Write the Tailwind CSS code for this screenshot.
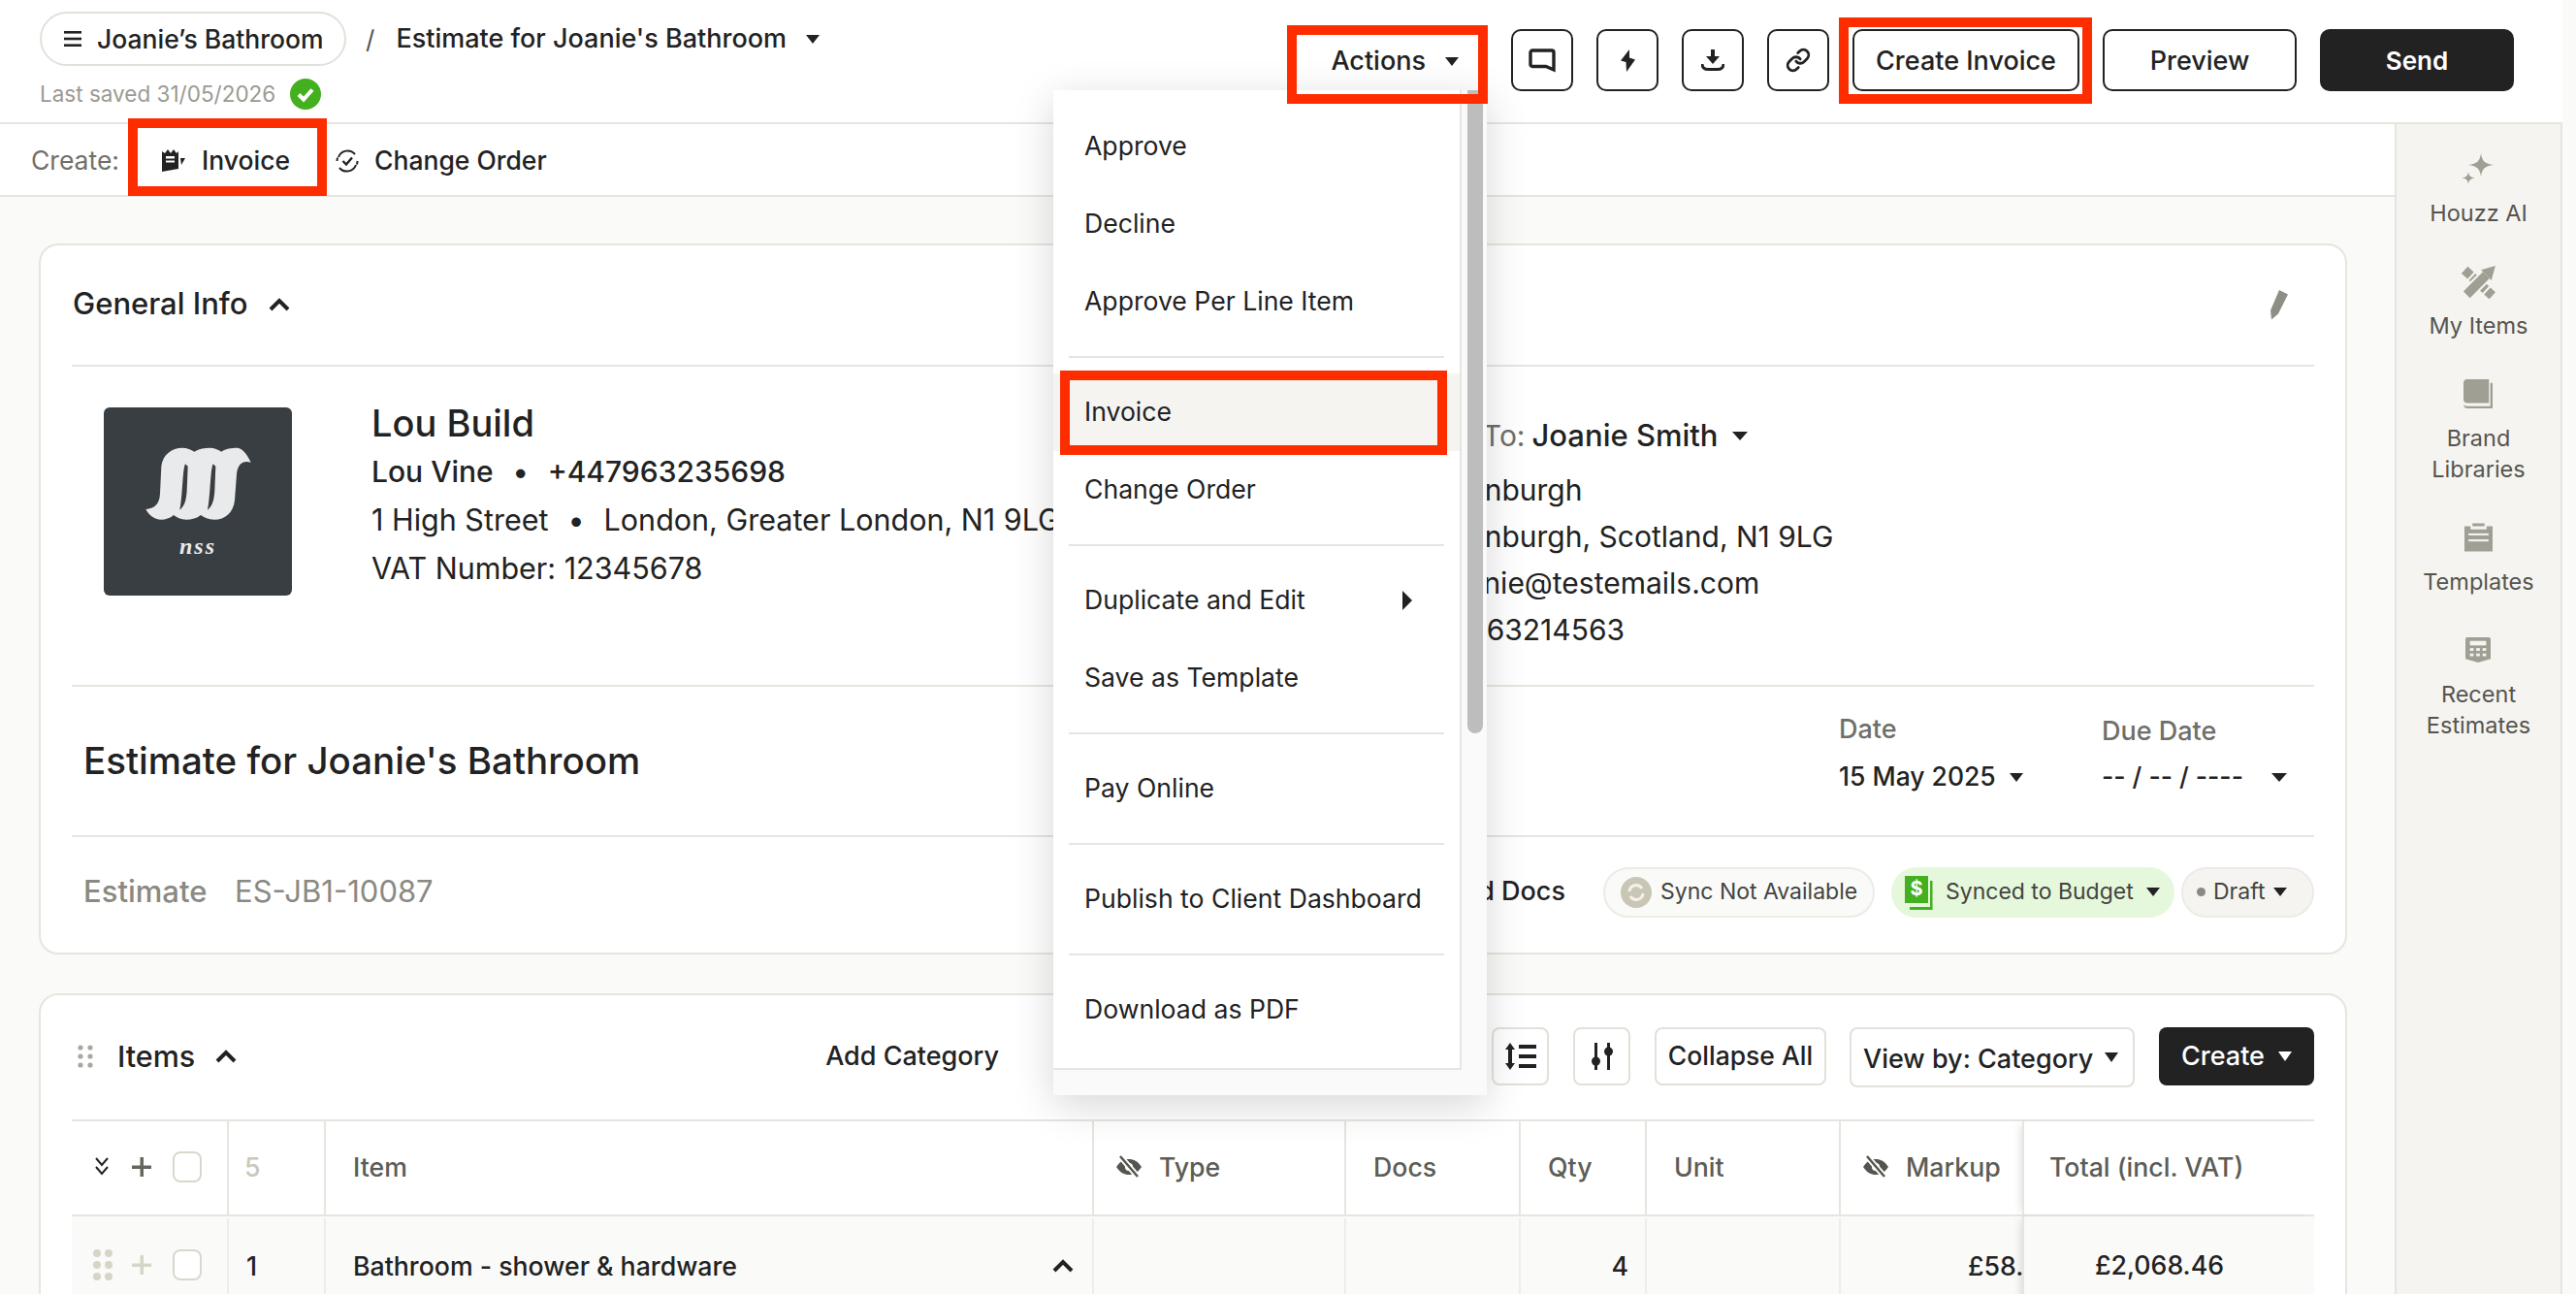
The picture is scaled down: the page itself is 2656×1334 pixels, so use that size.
<!DOCTYPE html>
<html lang="en">
<head>
  <meta charset="UTF-8" />
  <title>Estimate for Joanie's Bathroom</title>
  <script src="https://cdn.jsdelivr.net/npm/@tailwindcss/browser@4"></script>
</head>
<body class="bg-[#fafaf8]">
<div class="relative w-[2656px] h-[1334px] overflow-hidden font-['Inter',sans-serif] text-[#222222]">

  <!-- top bar -->
  <header class="w-[2642px] h-[128px] bg-white border-b-2 border-[#e6e5df] flex justify-between">
    <div class="pl-[41px] pt-[12px]">
      <div class="flex items-center">
        <div class="h-[56px] w-[316px] border-2 border-[#e2e1d9] rounded-full flex items-center pl-[23px] gap-[16px] text-[26.5px] font-medium whitespace-nowrap">
          <svg width="18" height="16" viewBox="0 0 18 16" fill="#222"><rect width="18" height="2.6"/><rect y="6.7" width="18" height="2.6"/><rect y="13.4" width="18" height="2.6"/></svg>
          <span class="pt-[1px]">Joanie’s Bathroom</span>
        </div>
        <span class="ml-[20px] text-[26px] text-[#555]">/</span>
        <span class="ml-[22px] pt-[1px] text-[27px] font-medium whitespace-nowrap">Estimate for Joanie's Bathroom</span>
        <span class="ml-[20px] border-x-[7px] border-t-[9px] border-x-transparent border-t-[#222]"></span>
      </div>
      <div class="flex items-center mt-[12px] gap-[15px] text-[22.5px] text-[#9b9a92]">
        <span>Last saved 31/05/2026</span>
        <svg width="32" height="32" viewBox="0 0 32 32"><circle cx="16" cy="16" r="16" fill="#43b01f"/><path d="M9 16.5l5 5 9-10" fill="none" stroke="#fff" stroke-width="4"/></svg>
      </div>
    </div>
    <div class="flex items-center gap-[24px] pr-[50px] pb-[2px] h-[126px]">
      <button class="w-[213px] h-[64px] pt-[2px] flex items-center justify-end pr-[30px] gap-[20px] text-[27px] font-medium">
        <span>Actions</span>
        <span class="border-x-[7px] border-t-[9px] border-x-transparent border-t-[#222]"></span>
      </button>
      <button class="w-[64px] h-[64px] border-2 border-[#222] rounded-[10px] flex items-center justify-center">
        <svg width="28" height="25" viewBox="0 0 28 25" fill="none" stroke="#222" stroke-width="3.4"><path d="M4 2H24a2 2 0 0 1 2 2V22L18 18.5H4a2 2 0 0 1-2-2V4a2 2 0 0 1 2-2Z"/></svg>
      </button>
      <button class="w-[64px] h-[64px] border-2 border-[#222] rounded-[10px] flex items-center justify-center">
        <svg width="15" height="23" viewBox="0 0 15 23" fill="#222"><path d="M9 0L0 11.5L5.5 13L6 23L15 10.5L9 8.5Z"/></svg>
      </button>
      <button class="w-[64px] h-[64px] border-2 border-[#222] rounded-[10px] flex items-center justify-center">
        <svg width="24" height="22" viewBox="0 0 24 22"><path d="M10 0h4v7h5l-7 8-7-8h5z" fill="#222"/><path d="M1 15c0 4 3 5.500 6 5.500h10c3 0 6-1.500 6-5.500" fill="none" stroke="#222" stroke-width="3"/></svg>
      </button>
      <button class="w-[64px] h-[64px] border-2 border-[#222] rounded-[10px] flex items-center justify-center">
        <svg width="26" height="26" viewBox="0 0 24 24" fill="none" stroke="#222" stroke-width="2.6" stroke-linecap="round"><path d="M10 13a5 5 0 0 0 7.540.54l3-3a5 5 0 0 0-7.070-7.070l-1.720 1.710"/><path d="M14 11a5 5 0 0 0-7.540-.54l-3 3a5 5 0 0 0 7.070 7.070l1.710-1.710"/></svg>
      </button>
      <button class="w-[234px] h-[64px] pt-[2px] border-2 border-[#222] rounded-[10px] text-[27px] font-medium whitespace-nowrap">Create Invoice</button>
      <button class="w-[200px] h-[64px] pt-[2px] border-2 border-[#222] rounded-[10px] text-[27px] font-medium">Preview</button>
      <button class="w-[200px] h-[64px] bg-[#222222] rounded-[10px] text-[26px] font-semibold text-white">Send</button>
    </div>
  </header>

  <div class="flex">
    <main class="w-[2469px] h-[1206px] overflow-hidden">
      <!-- create row -->
      <div class="h-[75px] pt-[2px] bg-white border-b-2 border-[#e6e5df] flex items-center pl-[32px] text-[26.5px] font-medium whitespace-nowrap">
        <span class="text-[#6f6f69] font-normal">Create:</span>
        <svg class="ml-[44px]" width="24" height="23" viewBox="0 0 24 23" fill="#222"><path d="M0 2l3 2 3-4 3 4 3-4 3 4 2-2v18l-17 3z"/><rect x="4" y="7" width="9" height="2.500" fill="#fff"/><rect x="4" y="11.500" width="9" height="2" fill="#fff"/><path d="M19 9h5l-4 7z"/></svg>
        <span class="ml-[17px]">Invoice</span>
        <svg class="ml-[47px]" width="24" height="24" viewBox="0 0 24 24" fill="none" stroke="#222" stroke-width="2"><path d="M3 8a10 10 0 0 1 17-3"/><path d="M21 16a10 10 0 0 1-17 3"/><path d="M1.500 12a10 10 0 0 1 .6-3.500M22.500 12a10 10 0 0 1-.6 3.500"/><path d="M7.500 12l3.500 3.500 6-7" stroke-width="2.400"/></svg>
        <span class="ml-[16px]">Change Order</span>
      </div>

      <!-- general info card -->
      <section class="ml-[40px] mt-[48px] w-[2380px] h-[733px] bg-white border-2 border-[#e6e5df] rounded-[20px] px-[32px]">
        <div class="h-[125px] flex items-center border-b-2 border-[#e6e5df] pb-[2px]">
          <span class="ml-[1px] text-[31px] font-medium">General Info</span>
          <svg class="ml-[21px]" width="22" height="14" viewBox="0 0 22 14" fill="none" stroke="#222" stroke-width="4"><path d="M2 12l9-9 9 9"/></svg>
          <svg class="ml-auto mr-[26px]" width="24" height="32" viewBox="0 0 24 32" fill="#8f8e86"><path d="M14 1l9 4.500-10 20-7 6-1-9.500z"/></svg>
        </div>
        <div class="h-[330px] flex border-b-2 border-[#e6e5df] whitespace-nowrap">
          <div class="ml-[33px] mt-[42px] w-[194px] h-[194px] shrink-0 bg-[#393e43] rounded-[6px] relative">
            <svg class="absolute inset-0" width="194" height="194" viewBox="50 33 582 582"><path fill="#e9eaeb" d="M180 348C205 346 222 335 224 300L228 215C232 178 262 158 292 158C308 158 320 164 330 170C345 160 362 158 378 158C392 158 404 164 414 170C428 160 445 158 462 158C482 160 495 182 505 203C482 196 464 206 461 240L455 320C451 358 425 380 392 380C374 380 360 374 350 366C338 376 322 380 305 380C288 380 276 374 266 366C255 376 240 380 228 380C205 380 190 366 180 348Z"/><path fill="#393e43" d="M302 208C294 222 294 300 285 350C300 338 305 320 307 290L310 215ZM388 208C380 222 380 300 371 350C386 338 391 320 393 290L396 215Z"/></svg>
            <span class="absolute left-0 right-0 top-[129px] text-center text-[24px] leading-[28px] font-bold italic font-['Liberation_Serif',serif] text-[#e9eaeb] tracking-[2px]">nss</span>
          </div>
          <div class="ml-[82px] w-[1104px] shrink-0 pt-[33px] text-[30.5px] leading-[50px]">
            <div class="text-[38px] font-medium">Lou Build</div>
            <div class="font-medium text-[30px]">Lou Vine<span class="mx-[20px]">•</span>+447963235698</div>
            <div>1 High Street<span class="mx-[20px]">•</span>London, Greater London, N1 9LG</div>
            <div>VAT Number: 12345678</div>
          </div>
          <div class="pt-[47px] text-[30px] leading-[48px]">
            <div class="mb-[8px] -ml-[8px] flex items-center text-[31px] font-medium"><span class="text-[#6f6f69] font-normal text-[30px]">Bill To:</span><span class="ml-[7px]">Joanie Smith</span><span class="ml-[14px] border-x-[8px] border-t-[9px] border-x-transparent border-t-[#222]"></span></div>
            <div>Edinburgh</div>
            <div>Edinburgh, Scotland, N1 9LG</div>
            <div>joanie@testemails.com</div>
            <div class="-ml-[8px]">07963214563</div>
          </div>
        </div>
        <div class="h-[155px] flex border-b-2 border-[#e6e5df] whitespace-nowrap">
          <h1 class="pl-[12px] self-center text-[38.5px] font-medium">Estimate for Joanie's Bathroom</h1>
          <div class="ml-auto w-[271px] pt-[28px]">
            <div class="text-[27px] leading-[32px] font-medium text-[#6f6f69]">Date</div>
            <div class="mt-[13px] h-[40px] flex items-center text-[26.5px] font-medium">15 May 2025<span class="ml-[14px] border-x-[7px] border-t-[9px] border-x-transparent border-t-[#222]"></span></div>
          </div>
          <div class="w-[219px] pt-[30px]">
            <div class="text-[27px] leading-[32px] font-medium text-[#6f6f69]">Due Date</div>
            <div class="mt-[11px] h-[40px] flex items-center text-[26.5px] font-medium">-- / -- / ----<span class="ml-auto mr-[28px] border-x-[8px] border-t-[9px] border-x-transparent border-t-[#222]"></span></div>
          </div>
        </div>
        <div class="h-[119px] pb-[6px] flex items-center whitespace-nowrap">
          <span class="pl-[12px] w-[168px] text-[31px] font-medium text-[#8a8982]">Estimate</span>
          <span class="text-[31px] text-[#8a8982]">ES-JB1-10087</span>
          <span class="ml-auto text-[27px] font-medium">Linked Docs</span>
          <div class="ml-[39px] w-[280px] h-[52px] border-2 border-[#ecebe5] bg-[#fafaf8] rounded-full flex items-center pl-[16px] gap-[9px] text-[23px] text-[#44443f]">
            <svg width="32" height="32" viewBox="0 0 32 32"><circle cx="16" cy="16" r="16" fill="#c9c6b5"/><path d="M9 15a7 7 0 0 1 13-3M23 17a7 7 0 0 1-13 3" fill="none" stroke="#f3f2ec" stroke-width="3"/></svg>
            <span>Sync Not Available</span>
          </div>
          <div class="ml-[17px] w-[292px] h-[52px] bg-[#e5f8dc] rounded-full flex items-center pl-[13px] text-[23px] text-[#44443f]">
            <svg width="30" height="36" viewBox="0 0 30 36"><path d="M1 1h24v28H1z" fill="#43b01f"/><path d="M27 6h2.500v30H6v-3h21z" fill="#43b01f"/><text x="13" y="21" text-anchor="middle" font-size="20" font-weight="700" fill="#fff" font-family="Inter">$</text></svg>
            <span class="ml-[13px]">Synced to Budget</span>
            <span class="ml-[13px] border-x-[7px] border-t-[9px] border-x-transparent border-t-[#222]"></span>
          </div>
          <div class="ml-[7px] w-[137px] h-[52px] border-2 border-[#ecebe5] bg-[#f5f4f1] rounded-full flex items-center pl-[14px] text-[23px] text-[#44443f]">
            <span class="w-[9px] h-[9px] rounded-full bg-[#8a8982]"></span>
            <span class="ml-[8px]">Draft</span>
            <span class="ml-[9px] border-x-[7px] border-t-[9px] border-x-transparent border-t-[#222]"></span>
          </div>
        </div>
      </section>

      <!-- items card -->
      <section class="ml-[40px] mt-[40px] w-[2380px] h-[400px] bg-white border-2 border-[#e6e5df] rounded-[20px] px-[32px]">
        <div class="h-[128px] flex items-center pb-[2px] whitespace-nowrap">
          <svg class="ml-[6px]" width="16" height="24" viewBox="0 0 16 24" fill="#a9a89d"><circle cx="3" cy="3" r="2.600"/><circle cx="13" cy="3" r="2.600"/><circle cx="3" cy="12" r="2.600"/><circle cx="13" cy="12" r="2.600"/><circle cx="3" cy="21" r="2.600"/><circle cx="13" cy="21" r="2.600"/></svg>
          <span class="ml-[25px] text-[30.5px] font-medium">Items</span>
          <svg class="ml-[21px]" width="22" height="14" viewBox="0 0 22 14" fill="none" stroke="#222" stroke-width="4"><path d="M2 12l9-9 9 9"/></svg>
          <span class="ml-auto mr-[508px] text-[27px] font-medium">Add Category</span>
          <div class="w-[59px] h-[60px] border-2 border-[#e2e1d9] rounded-[8px] flex items-center justify-center">
            <svg width="32" height="28" viewBox="0 0 32 28" fill="#222"><path d="M5 0l5 7H7v14h3l-5 7-5-7h3V7H0z"/><rect x="14" y="2" width="18" height="4"/><rect x="14" y="12" width="18" height="4"/><rect x="14" y="22" width="18" height="4"/></svg>
          </div>
          <div class="ml-[25px] w-[59px] h-[60px] border-2 border-[#e2e1d9] rounded-[8px] flex items-center justify-center">
            <svg width="22" height="28" viewBox="0 0 22 28" fill="#222"><rect x="3" y="0" width="3" height="28"/><circle cx="4.500" cy="19" r="4.500"/><rect x="16" y="0" width="3" height="28"/><circle cx="17.500" cy="9" r="4.500"/></svg>
          </div>
          <button class="ml-[25px] w-[177px] h-[60px] border-2 border-[#e2e1d9] rounded-[8px] text-[26.5px] font-medium">Collapse All</button>
          <button class="ml-[24px] w-[294px] h-[62px] mt-[2px] border-2 border-[#e2e1d9] rounded-[8px] flex items-center pl-[12px] text-[27px] font-medium">
            <span class="pt-[4px]">View by: Category</span>
            <span class="ml-[12px] border-x-[7px] border-t-[10px] border-x-transparent border-t-[#222]"></span>
          </button>
          <button class="ml-[25px] w-[160px] h-[60px] bg-[#222222] rounded-[8px] flex items-center justify-center gap-[14px] text-[27px] font-medium text-white">
            <span>Create</span>
            <span class="border-x-[7px] border-t-[10px] border-x-transparent border-t-white"></span>
          </button>
        </div>

        <!-- table header -->
        <div class="grid grid-cols-[160px_100px_792px_260px_180px_130px_200px_189px_300px] h-[100px] pb-[2px] border-y-2 border-[#e6e5df] text-[26.7px] font-medium text-[#5c5c56] whitespace-nowrap">
          <div class="flex items-center pl-[24px]">
            <svg width="14" height="20" viewBox="0 0 14 20" fill="none" stroke="#222" stroke-width="2"><path d="M1 1l6 7 6-7M1 10l6 7 6-7"/></svg>
            <svg class="ml-[24px]" width="20" height="20" viewBox="0 0 20 20" fill="#66665f"><rect x="8.500" width="3.500" height="20"/><rect y="8.500" width="20" height="3.500"/></svg>
            <span class="ml-[22px] w-[30px] h-[32px] border-2 border-[#d9d8cf] rounded-[8px] bg-white"></span>
          </div>
          <div class="border-l-2 border-[#e6e5df] -mb-[2px] flex items-center pb-[2px] pl-[16px] text-[#c9c8bb]">5</div>
          <div class="border-l-2 border-[#e6e5df] -mb-[2px] flex items-center pb-[2px] pl-[28px]">Item</div>
          <div class="border-l-2 border-[#e6e5df] -mb-[2px] flex items-center pb-[2px] pl-[22px] gap-[17px]">
            <svg width="28" height="24" viewBox="0 0 28 24" fill="#55554f"><path d="M1 12C5 6 9 4 14 4s9 2 13 8c-4 6-8 8-13 8S5 18 1 12z"/><circle cx="14" cy="12" r="4" fill="#fff"/><path d="M5 1l18 21" stroke="#fff" stroke-width="6"/><path d="M5 1l18 21" stroke="#55554f" stroke-width="2.500"/></svg>
            <span>Type</span>
          </div>
          <div class="border-l-2 border-[#e6e5df] -mb-[2px] flex items-center pb-[2px] pl-[28px]">Docs</div>
          <div class="border-l-2 border-[#e6e5df] -mb-[2px] flex items-center pb-[2px] pl-[28px]">Qty</div>
          <div class="border-l-2 border-[#e6e5df] -mb-[2px] flex items-center pb-[2px] pl-[28px]">Unit</div>
          <div class="border-l-2 border-[#e6e5df] -mb-[2px] flex items-center pb-[2px] pl-[22px] gap-[17px]">
            <svg width="28" height="24" viewBox="0 0 28 24" fill="#55554f"><path d="M1 12C5 6 9 4 14 4s9 2 13 8c-4 6-8 8-13 8S5 18 1 12z"/><circle cx="14" cy="12" r="4" fill="#fff"/><path d="M5 1l18 21" stroke="#fff" stroke-width="6"/><path d="M5 1l18 21" stroke="#55554f" stroke-width="2.500"/></svg>
            <span>Markup</span>
          </div>
          <div class="border-l-2 border-[#e6e5df] -mb-[2px] shadow-[-6px_0_8px_-4px_rgba(0,0,0,0.12)] flex items-center pb-[2px] pl-[26px]">Total (incl. VAT)</div>
        </div>

        <!-- first row -->
        <div class="grid grid-cols-[160px_100px_792px_260px_180px_130px_200px_189px_300px] h-[100px] bg-[#fafaf8] text-[26.7px] font-medium whitespace-nowrap">
          <div class="flex items-center pl-[22px]">
            <svg width="20" height="32" viewBox="0 0 20 32" fill="#d6d5c8"><circle cx="4" cy="4" r="4"/><circle cx="16" cy="4" r="4"/><circle cx="4" cy="16" r="4"/><circle cx="16" cy="16" r="4"/><circle cx="4" cy="28" r="4"/><circle cx="16" cy="28" r="4"/></svg>
            <svg class="ml-[20px]" width="20" height="20" viewBox="0 0 20 20" fill="#d6d5c8"><rect x="8.500" width="3.500" height="20"/><rect y="8.500" width="20" height="3.500"/></svg>
            <span class="ml-[22px] w-[30px] h-[32px] border-2 border-[#d9d8cf] rounded-[8px] bg-white"></span>
          </div>
          <div class="border-l-2 border-[#eeede8] mt-[2px] flex items-center pl-[18px]">1</div>
          <div class="border-l-2 border-[#eeede8] mt-[2px] flex items-center pl-[28px] pr-[19px] justify-between">
            <span>Bathroom - shower &amp; hardware</span>
            <svg width="22" height="14" viewBox="0 0 22 14" fill="none" stroke="#222" stroke-width="4"><path d="M2 12l9-9 9 9"/></svg>
          </div>
          <div class="border-l-2 border-[#eeede8] mt-[2px]"></div>
          <div class="border-l-2 border-[#eeede8] mt-[2px]"></div>
          <div class="border-l-2 border-[#eeede8] mt-[2px] flex items-center justify-end pr-[17px]">4</div>
          <div class="border-l-2 border-[#eeede8] mt-[2px]"></div>
          <div class="border-l-2 border-[#eeede8] mt-[2px] flex items-center pl-[131px] overflow-hidden">£58.</div>
          <div class="border-l-2 border-[#e6e5df] shadow-[-6px_0_8px_-4px_rgba(0,0,0,0.12)] flex items-center pl-[73px]">£2,068.46</div>
        </div>
      </section>
    </main>

    <!-- right rail -->
    <aside class="w-[173px] h-[1206px] bg-[#f5f4f1] border-x-2 border-[#e6e5df] pt-[28px] flex flex-col items-center gap-[36px] text-[23.5px] leading-[32px] text-center text-[#55554f]">
      <div class="flex flex-col items-center gap-[12px]">
        <svg width="36" height="36" viewBox="0 0 36 36" fill="#a09f93"><path d="M21 2c1 8 4 11 13 12-9 1-12 4-13 12-1-8-4-11-13-12 9-1 12-4 13-12z"/><path d="M8 21c.5 4 2 6 7 6.500-5 .5-6.500 2.500-7 6.500-.5-4-2-6-7-6.500 5-.5 6.500-2.500 7-6.500z"/></svg>
        <span>Houzz AI</span>
      </div>
      <div class="flex flex-col items-center gap-[12px]">
        <svg width="36" height="36" viewBox="0 0 34 34" fill="none"><path d="M3 6L30 31" stroke="#a09f93" stroke-width="9" stroke-dasharray="8 2"/><path d="M5 30L24 11" stroke="#f5f4f1" stroke-width="13"/><path d="M5 30L24 11" stroke="#a09f93" stroke-width="9"/><path d="M19 6L33 2 29 16Z" fill="#a09f93"/></svg>
        <span>My Items</span>
      </div>
      <div class="flex flex-col items-center gap-[12px]">
        <svg width="30" height="36" viewBox="0 0 32 32" fill="#a09f93"><path d="M4 0h24v26H4a4 4 0 0 1-4-3V4a4 4 0 0 1 4-4z"/><path d="M29.500 4H32v28H4c-2 0-4-2-4-4 1 1 2 1.500 4 1.500h25.500z"/></svg>
        <span>Brand<br>Libraries</span>
      </div>
      <div class="flex flex-col items-center gap-[12px]">
        <svg width="29" height="36" viewBox="0 0 28 28" fill="#a09f93"><path d="M8 0h12v3H8zM0 3h6v3h16V3h6v25H0z"/><rect x="4" y="10" width="20" height="2" fill="#f5f4f1"/><rect x="4" y="16" width="20" height="2" fill="#f5f4f1"/></svg>
        <span>Templates</span>
      </div>
      <div class="flex flex-col items-center gap-[12px]">
        <svg width="26" height="36" viewBox="0 0 28 28" fill="#a09f93"><path d="M2 0h24a2 2 0 0 1 2 2v22l-14 4-14-4V2a2 2 0 0 1 2-2z"/><rect x="5" y="4" width="18" height="5" fill="#f5f4f1"/><g fill="#f5f4f1"><rect x="5" y="12" width="4" height="3"/><rect x="12" y="12" width="4" height="3"/><rect x="19" y="12" width="4" height="3"/><rect x="5" y="18" width="4" height="3"/><rect x="12" y="18" width="4" height="3"/><rect x="19" y="18" width="4" height="3"/></g></svg>
        <span>Recent<br>Estimates</span>
      </div>
    </aside>
  </div>

  <!-- actions menu -->
  <div class="absolute left-[1086px] top-[93px] w-[447px] h-[1036px] bg-[#fafafa] shadow-[0_10px_40px_rgba(0,0,0,0.16)] flex items-start text-[26.6px] text-[#222] whitespace-nowrap">
    <div class="w-[421px] h-[1010px] bg-white border-r-2 border-b-2 border-[#e6e5df] pt-[18px]">
      <div class="h-[80px] pb-[1px] flex items-center pl-[32px]">Approve</div>
      <div class="h-[80px] pb-[1px] flex items-center pl-[32px]">Decline</div>
      <div class="h-[80px] pb-[1px] flex items-center pl-[32px]">Approve Per Line Item</div>
      <div class="h-[2px] my-[16px] mx-[16px] bg-[#e6e5df]"></div>
      <div class="h-[80px] pb-[1px] flex items-center pl-[32px] bg-[#f5f4f1]">Invoice</div>
      <div class="h-[80px] pb-[1px] flex items-center pl-[32px]">Change Order</div>
      <div class="h-[2px] my-[16px] mx-[16px] bg-[#e6e5df]"></div>
      <div class="h-[80px] pb-[1px] flex items-center pl-[32px] pr-[49px] justify-between">
        <span>Duplicate and Edit</span>
        <span class="border-y-[10px] border-l-[10px] border-y-transparent border-l-[#222]"></span>
      </div>
      <div class="h-[80px] pb-[1px] flex items-center pl-[32px]">Save as Template</div>
      <div class="h-[2px] my-[16px] mx-[16px] bg-[#e6e5df]"></div>
      <div class="h-[80px] pb-[1px] flex items-center pl-[32px]">Pay Online</div>
      <div class="h-[2px] my-[16px] mx-[16px] bg-[#e6e5df]"></div>
      <div class="h-[80px] pb-[1px] flex items-center pl-[32px]">Publish to Client Dashboard</div>
      <div class="h-[2px] my-[16px] mx-[16px] bg-[#e6e5df]"></div>
      <div class="h-[80px] pb-[1px] flex items-center pl-[32px]">Download as PDF</div>
    </div>
    <div class="ml-[6px] w-[16px] h-[663px] rounded-b-full bg-[#bdbdbd]"></div>
  </div>

  <!-- red annotation boxes -->
  <div class="absolute left-[132px] top-[122px] w-[205px] h-[80px] border-[10px] border-[#fe2d00]"></div>
  <div class="absolute left-[1327px] top-[26px] w-[207px] h-[81px] border-[10px] border-[#fe2d00]"></div>
  <div class="absolute left-[1896px] top-[18px] w-[261px] h-[89px] border-[10px] border-[#fe2d00]"></div>
  <div class="absolute left-[1093px] top-[382px] w-[399px] h-[87px] border-[10px] border-[#fe2d00]"></div>
</div>
</body>
</html>
